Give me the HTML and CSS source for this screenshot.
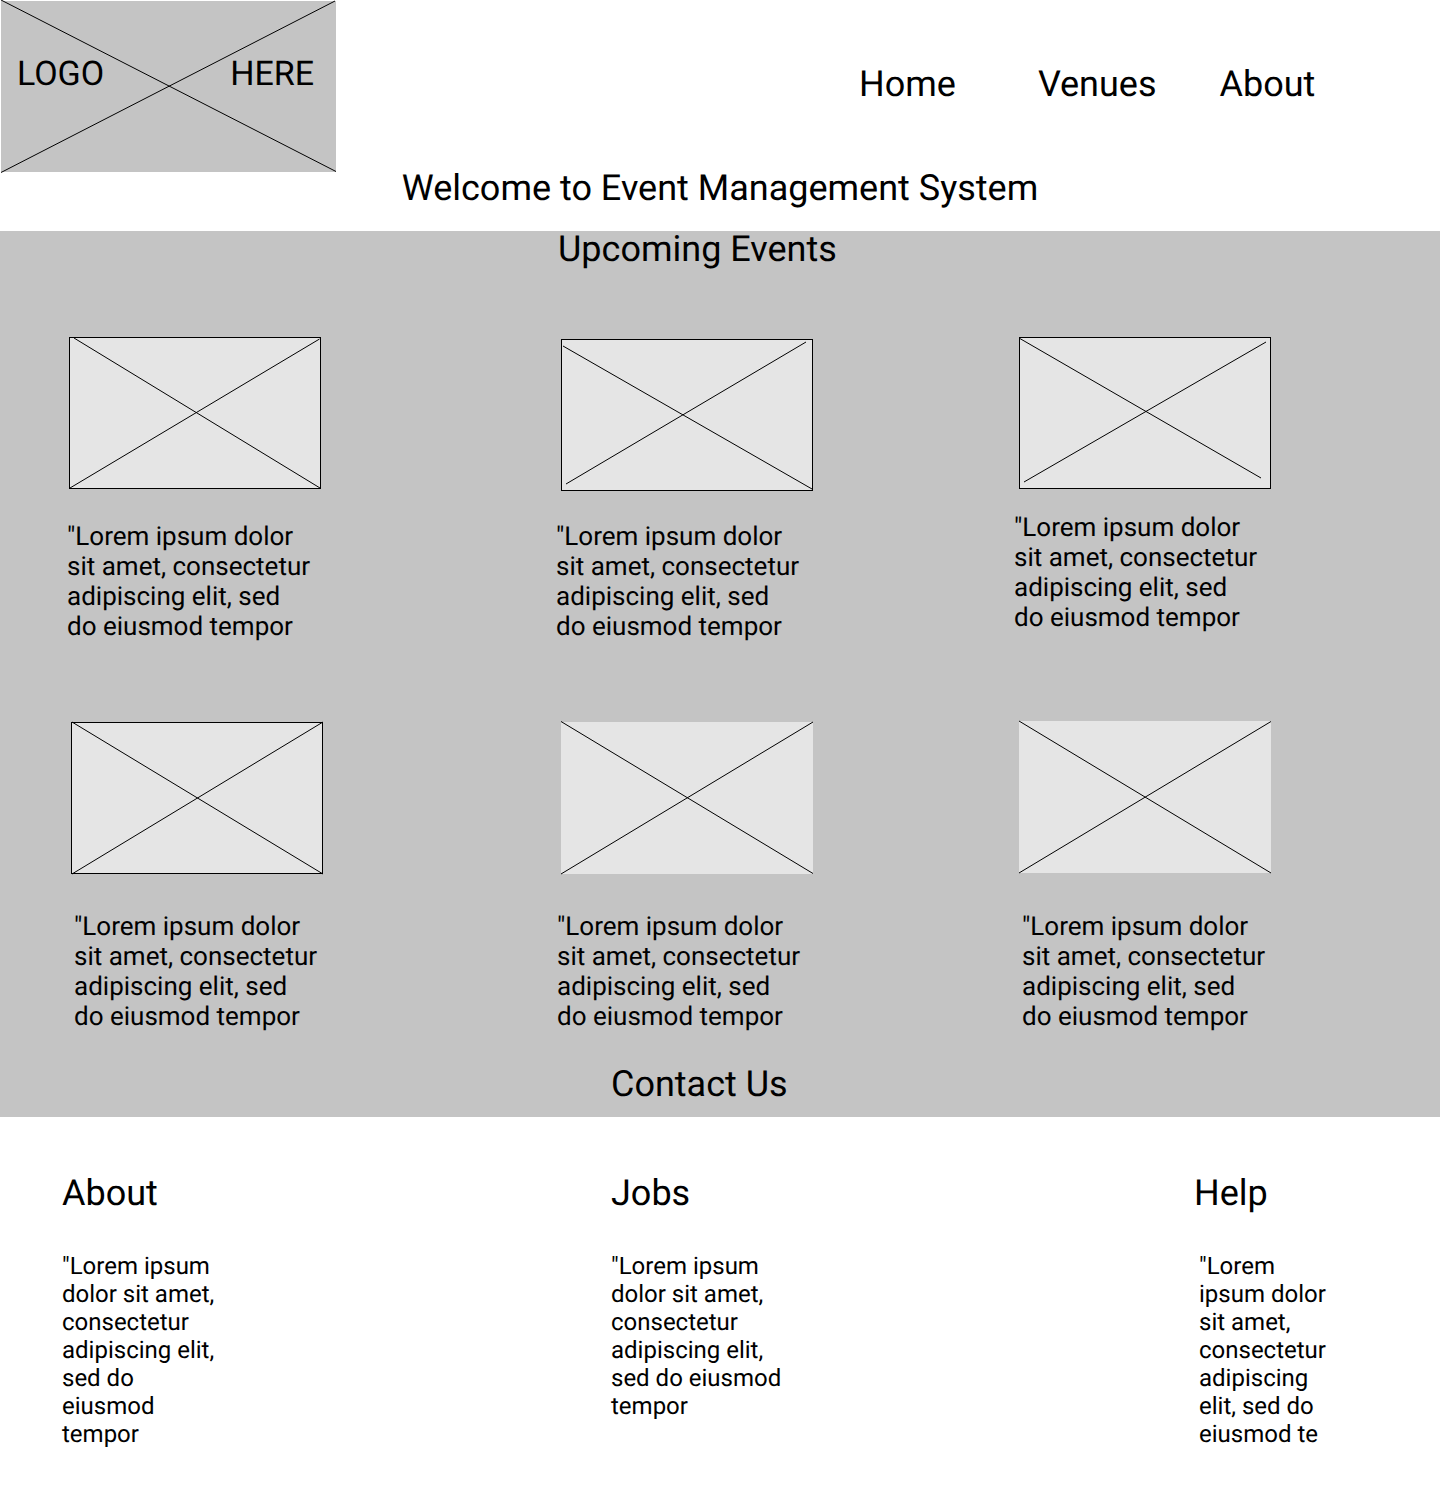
FILE: index.html
```html
<!DOCTYPE html>
<html lang="en">
  <head>
    <meta charset="UTF-8" />
    <meta name="viewport" content="width=device-width, initial-scale=1.0" />
    <title>Event Management System</title>
    <link rel="stylesheet" href="styles.css">
  </head>
  <body>
    <!-- Header -->
    <header class="site-header">
      <div class="header-top">
        <div class="logo">
          <svg class="placeholder-lines" viewBox="0 0 335 171">
            <line x1="0" y1="-1" x2="335" y2="170.5" />
            <line x1="0" y1="171.5" x2="334" y2="0" />
          </svg>
          <span class="logo-word">LOGO</span>
          <span class="logo-word">HERE</span>
        </div>
        <nav class="main-nav">
          <a class="nav-home" href="#">Home</a>
          <a class="nav-venues" href="#">Venues</a>
          <a href="#">About</a>
        </nav>
      </div>
      <h1 class="page-title">Welcome to Event Management System</h1>
    </header>

    <!-- Events -->
    <main class="events">
      <h2 class="events-title">Upcoming Events</h2>
      <div class="events-grid">
        <article class="card card-1">
          <svg class="thumb thumb-bordered" viewBox="0 0 252 152">
            <line x1="5" y1="1" x2="251" y2="151" />
            <line x1="1" y1="151" x2="250.5" y2="2" />
          </svg>
          <p class="card-text">"Lorem ipsum dolor sit amet, consectetur adipiscing elit, sed do eiusmod tempor</p>
        </article>
        <article class="card card-2">
          <svg class="thumb thumb-bordered" viewBox="0 0 252 152">
            <line x1="2" y1="7" x2="251" y2="150" />
            <line x1="5" y1="145" x2="245" y2="3" />
          </svg>
          <p class="card-text">"Lorem ipsum dolor sit amet, consectetur adipiscing elit, sed do eiusmod tempor</p>
        </article>
        <article class="card card-3">
          <svg class="thumb thumb-bordered" viewBox="0 0 252 152">
            <line x1="0" y1="1" x2="242" y2="141" />
            <line x1="5" y1="145" x2="247" y2="5" />
          </svg>
          <p class="card-text">"Lorem ipsum dolor sit amet, consectetur adipiscing elit, sed do eiusmod tempor</p>
        </article>
        <article class="card card-4">
          <svg class="thumb thumb-bordered" viewBox="0 0 252 152">
            <line x1="1" y1="0" x2="252" y2="152" />
            <line x1="1" y1="152" x2="252" y2="0" />
          </svg>
          <p class="card-text">"Lorem ipsum dolor sit amet, consectetur adipiscing elit, sed do eiusmod tempor</p>
        </article>
        <article class="card card-5">
          <svg class="thumb" viewBox="0 0 252 152">
            <line x1="0" y1="-0.5" x2="252" y2="151.5" />
            <line x1="0" y1="152" x2="252" y2="0" />
          </svg>
          <p class="card-text">"Lorem ipsum dolor sit amet, consectetur adipiscing elit, sed do eiusmod tempor</p>
        </article>
        <article class="card card-6">
          <svg class="thumb" viewBox="0 0 252 152">
            <line x1="0" y1="0" x2="252" y2="152" />
            <line x1="0" y1="152" x2="252" y2="0.5" />
          </svg>
          <p class="card-text">"Lorem ipsum dolor sit amet, consectetur adipiscing elit, sed do eiusmod tempor</p>
        </article>
      </div>
      <h2 class="contact-title">Contact Us</h2>
    </main>

    <!-- Footer -->
    <footer class="site-footer">
      <section class="footer-col col-about">
        <h3>About</h3>
        <p>"Lorem ipsum dolor sit amet, consectetur adipiscing elit, sed do eiusmod tempor</p>
      </section>
      <section class="footer-col col-jobs">
        <h3>Jobs</h3>
        <p>"Lorem ipsum dolor sit amet, consectetur adipiscing elit, sed do eiusmod tempor</p>
      </section>
      <section class="footer-col col-help">
        <h3>Help</h3>
        <p>"Lorem ipsum dolor sit amet, consectetur adipiscing elit, sed do eiusmod te</p>
      </section>
    </footer>
  </body>
</html>
```

FILE: styles.css
```css
* {
  box-sizing: border-box;
}

body {
  font-family: Roboto, "Liberation Sans", sans-serif;
  margin: 0;
  padding: 0;
  background-color: #fff;
  color: #000;
  text-rendering: geometricPrecision;
}

h1,
h2,
h3,
p {
  margin: 0;
  font-weight: 400;
}

/* Header */
.site-header {
  height: 231px;
}

.header-top {
  display: flex;
  height: 172px;
}

.logo {
  position: relative;
  display: flex;
  justify-content: space-between;
  align-items: flex-start;
  flex: none;
  width: 335px;
  height: 171px;
  margin: 1px 0 0 1px;
  padding: 51px 22px 0 16px;
  background-color: #c4c4c4;
  font-size: 34px;
  line-height: 44px;
}

.logo-word {
  position: relative;
}

.placeholder-lines {
  position: absolute;
  top: 0;
  left: 0;
  width: 335px;
  height: 171px;
  overflow: visible;
}

.placeholder-lines line,
.thumb line {
  stroke: #000;
  stroke-width: 1;
}

.main-nav {
  display: flex;
  margin-left: 523px;
  padding-top: 63px;
  font-size: 36px;
  line-height: 42px;
}

.main-nav a {
  color: #000;
  text-decoration: none;
}

.nav-home {
  margin-right: 82px;
}

.nav-venues {
  margin-right: 63px;
}

.page-title {
  font-size: 36px;
  line-height: 42px;
  text-align: center;
  margin-top: -5px;
}

/* Events */
.events {
  height: 886px;
  background-color: #c4c4c4;
}

.events-title {
  font-size: 36px;
  line-height: 36px;
  margin-left: 558px;
  height: 106px;
}

.events-grid {
  display: grid;
  grid-template-columns: 490px 458px 1fr;
  grid-template-rows: 385px 330px;
}

.card-text {
  width: 245px;
  font-size: 26px;
  line-height: 30px;
  margin-top: 33px;
}

.thumb {
  display: block;
  width: 252px;
  height: 152px;
  background-color: #e5e5e5;
  overflow: visible;
}

.thumb-bordered {
  outline: 1px solid #000;
  outline-offset: -1px;
}

/* each card sits a little off the grid, as it does in the wireframe */
.card-1 {
  padding-left: 69px;
}

.card-1 .card-text {
  margin-left: -2px;
}

.card-2 {
  padding-left: 71px;
  padding-top: 2px;
}

.card-2 .card-text {
  margin-left: -5px;
  margin-top: 31px;
}

.card-3 {
  padding-left: 71px;
}

.card-3 .card-text {
  margin-left: -5px;
  margin-top: 24px;
}

.card-4 {
  padding-left: 71px;
}

.card-4 .card-text {
  margin-left: 3px;
  margin-top: 38px;
}

.card-5 {
  padding-left: 71px;
}

.card-5 .card-text {
  margin-left: -4px;
  margin-top: 38px;
}

.card-6 {
  padding-left: 71px;
  margin-top: -1px;
}

.card-6 .card-text {
  margin-left: 3px;
  margin-top: 39px;
}

.contact-title {
  font-size: 36px;
  line-height: 42px;
  margin-left: 611px;
  margin-top: 11px;
}

/* Footer */
.site-footer {
  display: flex;
  padding-top: 55px;
  height: 388px;
}

.footer-col h3 {
  font-size: 36px;
  line-height: 42px;
  margin-bottom: 38px;
}

.footer-col p {
  font-size: 24px;
  line-height: 28px;
}

.col-about {
  width: 170px;
  margin-left: 62px;
}

.col-jobs {
  width: 175px;
  margin-left: 379px;
}

.col-help {
  width: 135px;
  margin-left: 408px;
}

.col-help p {
  margin-left: 5px;
}
```
